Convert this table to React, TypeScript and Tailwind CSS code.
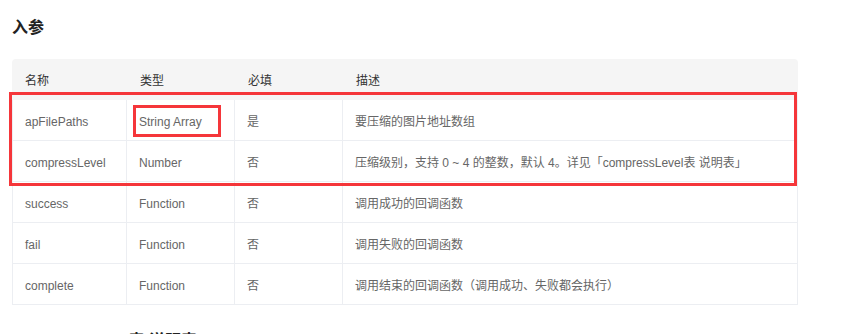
import React from 'react';

type Param = {
  name: string;
  type: string;
  required: string;
  desc: string;
};

const params: Param[] = [
  { name: 'apFilePaths', type: 'String Array', required: '是', desc: '要压缩的图片地址数组' },
  { name: 'compressLevel', type: 'Number', required: '否', desc: '压缩级别，支持 0 ~ 4 的整数，默认 4。详见「compressLevel表 说明表」' },
  { name: 'success', type: 'Function', required: '否', desc: '调用成功的回调函数' },
  { name: 'fail', type: 'Function', required: '否', desc: '调用失败的回调函数' },
  { name: 'complete', type: 'Function', required: '否', desc: '调用结束的回调函数（调用成功、失败都会执行）' },
];

const font = "font-['Liberation_Sans','Noto_Sans_CJK_SC',sans-serif]";

const App: React.FC = () => {
  return (
    <div className={`h-[334px] overflow-hidden bg-white pl-3 pt-[17px] ${font}`}>
      <h3 className="text-[16px] leading-[22px] font-bold text-[#222]">入参</h3>

      {/* Params table */}
      <div className="relative mt-[20px] w-[786px]">
        <div className="grid h-[41px] grid-cols-[115px_108px_108px_1fr] items-center rounded-t-[4px] bg-[#f5f5f5] pt-[2px] text-[12px] text-[#333]">
          <div className="pl-[13px]">名称</div>
          <div className="pl-[13px]">类型</div>
          <div className="pl-[13px]">必填</div>
          <div className="pl-[13px]">描述</div>
        </div>
        <div className="border-x border-[#eceef2] text-[12px] text-[#666]">
          {params.map((p) => (
            <div key={p.name} className="grid h-[41px] grid-cols-[114px_108px_108px_1fr] border-b border-[#eceef2]">
              <div className="flex items-center border-r border-[#eceef2] pl-[12px] pt-[3px]">{p.name}</div>
              <div className="flex items-center border-r border-[#eceef2] pl-[12px] pt-[3px]">{p.type}</div>
              <div className="flex items-center border-r border-[#eceef2] pl-[12px] pt-[3px]">{p.required}</div>
              <div className="flex items-center pl-[12px] pt-[3px]">{p.desc}</div>
            </div>
          ))}
        </div>

        {/* highlight marks */}
        <div className="absolute left-[-3px] top-[33px] h-[94px] w-[788px] border-[3px] border-[#f5363a]" />
        <div className="absolute left-[121px] top-[46px] h-[32px] w-[88px] border-[3px] border-[#f5363a]" />
      </div>

      <h3 className="mt-[25px] text-[16px] leading-[22px] font-bold text-[#222]">compressLevel表 说明表</h3>
    </div>
  );
};

export default App;
